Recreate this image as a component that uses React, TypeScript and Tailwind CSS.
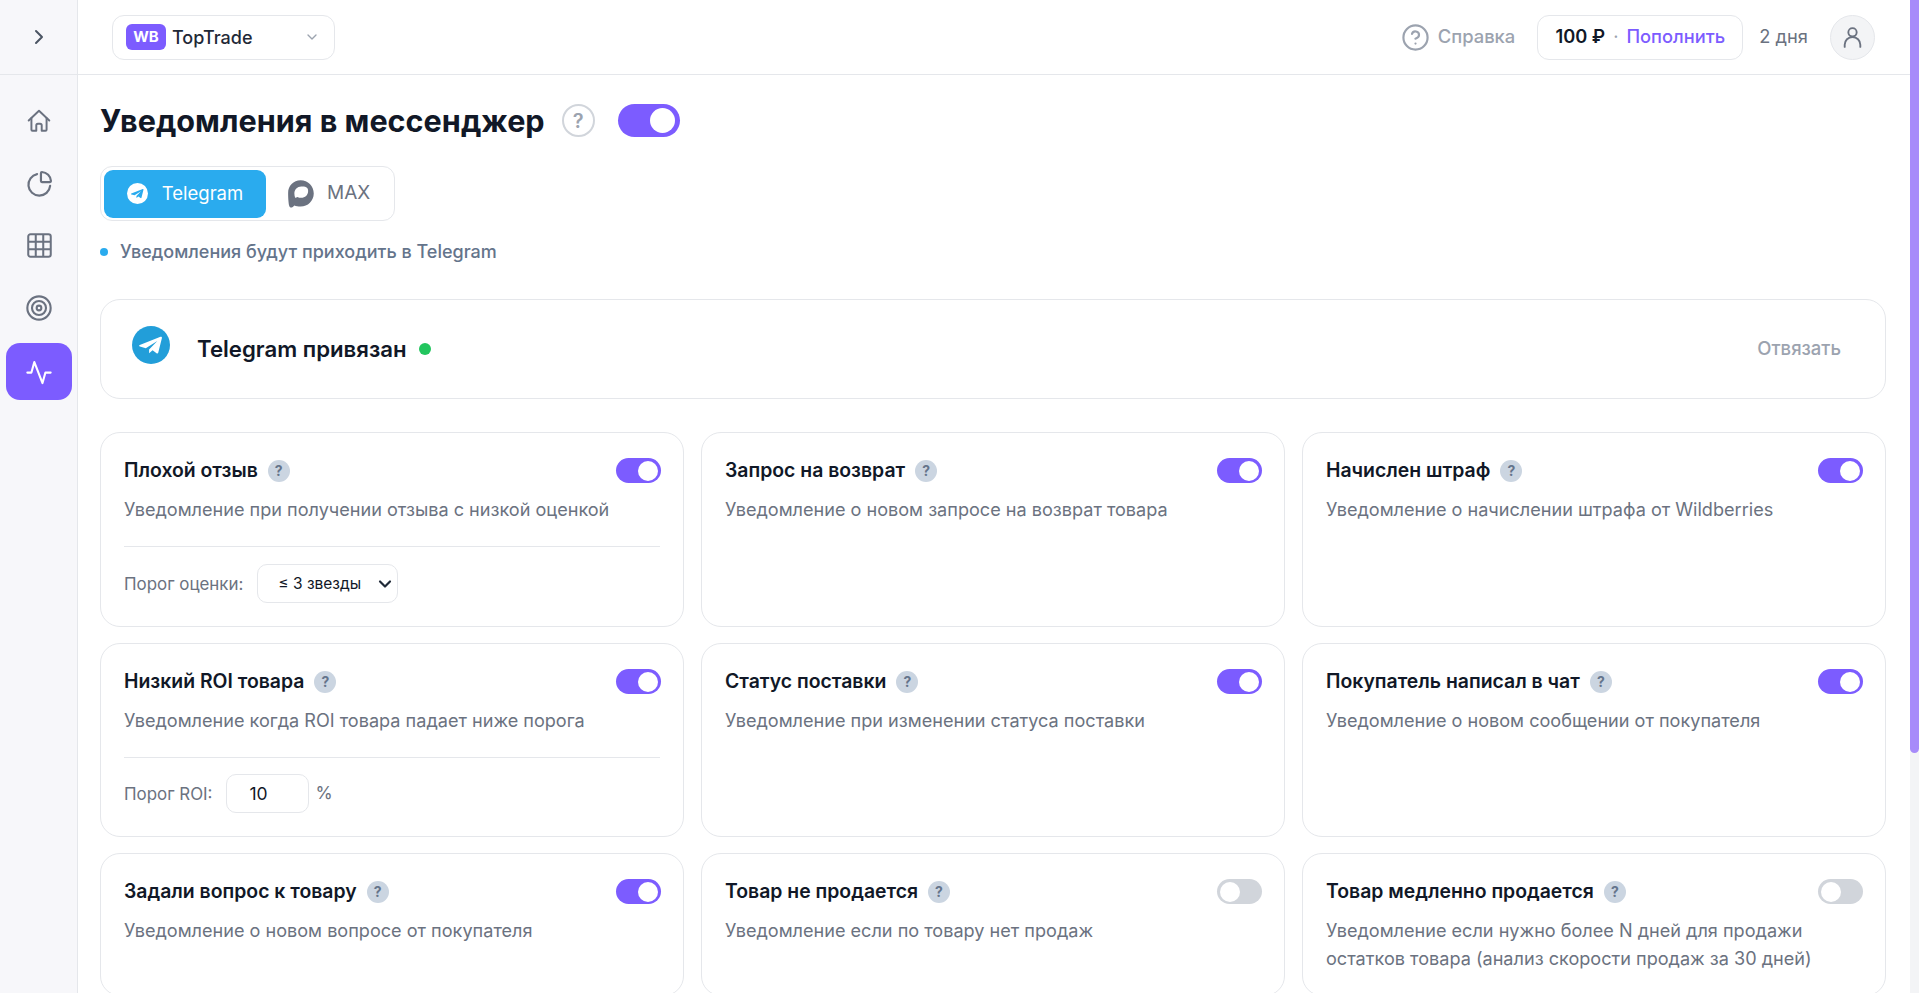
import { ChevronDown, ChevronRight, CircleHelp } from 'lucide-react';

const purple = 'bg-[#7c5cff]';

const cards = [
  { title: 'Плохой отзыв', text: 'Уведомление при получении отзыва с низкой оценкой', on: true, extra: 'rating' },
  { title: 'Запрос на возврат', text: 'Уведомление о новом запросе на возврат товара', on: true },
  { title: 'Начислен штраф', text: 'Уведомление о начислении штрафа от Wildberries', on: true },
  { title: 'Низкий ROI товара', text: 'Уведомление когда ROI товара падает ниже порога', on: true, extra: 'roi' },
  { title: 'Статус поставки', text: 'Уведомление при изменении статуса поставки', on: true },
  { title: 'Покупатель написал в чат', text: 'Уведомление о новом сообщении от покупателя', on: true },
  { title: 'Задали вопрос к товару', text: 'Уведомление о новом вопросе от покупателя', on: true },
  { title: 'Товар не продается', text: 'Уведомление если по товару нет продаж', on: false },
  {
    title: 'Товар медленно продается',
    text: 'Уведомление если нужно более N дней для продажи остатков товара (анализ скорости продаж за 30 дней)',
    on: false,
  },
];

function HomeIcon() {
  return (
    <svg viewBox="0 0 24 24" className="h-[26px] w-[26px]" fill="none" stroke="currentColor" strokeWidth="1.8" strokeLinecap="round" strokeLinejoin="round">
      <path d="M2.5 11.5 12 2.5l9.5 9" />
      <path d="M5 9.5V20a1 1 0 0 0 1 1h3.5v-5a1.5 1.5 0 0 1 1.5-1.5h2a1.5 1.5 0 0 1 1.5 1.5v5H18a1 1 0 0 0 1-1V9.500" />
    </svg>
  );
}

function PieIcon() {
  return (
    <svg viewBox="0 0 24 24" className="h-[29px] w-[29px]" fill="none" stroke="currentColor" strokeWidth="1.8" strokeLinecap="round" strokeLinejoin="round">
      <path d="M10 4.200A9 9 0 1 0 20.800 14" />
      <path d="M14 2.500a8 8 0 0 1 7.500 7.500.8.8 0 0 1-.8.8H14a.8.8 0 0 1-.8-.8V3.300a.8.8 0 0 1 .8-.8z" />
    </svg>
  );
}

function GridIcon() {
  return (
    <svg viewBox="0 0 24 24" className="h-[27px] w-[27px]" fill="none" stroke="currentColor" strokeWidth="1.800" strokeLinejoin="round">
      <rect x="2" y="2" width="20" height="20" rx="2" />
      <path d="M2 8.670h20M2 15.330h20M8.670 2v20M15.330 2v20" />
    </svg>
  );
}

function TargetIcon() {
  return (
    <svg viewBox="0 0 24 24" className="h-[28px] w-[28px]" fill="none" stroke="currentColor" strokeWidth="1.8">
      <circle cx="12" cy="12" r="10" />
      <circle cx="12" cy="12" r="6" />
      <circle cx="12" cy="12" r="2" />
    </svg>
  );
}

function PulseIcon() {
  return (
    <svg viewBox="0 0 24 24" className="h-[28px] w-[28px]" fill="none" stroke="currentColor" strokeWidth="1.8" strokeLinecap="round" strokeLinejoin="round">
      <path d="M2 12.500h3.500l2.500-9 7 18 2.500-9H22" />
    </svg>
  );
}

function UserIcon() {
  return (
    <svg viewBox="0 0 24 24" className="h-[25px] w-[25px]" fill="none" stroke="#6b7280" strokeWidth="1.800" strokeLinecap="round">
      <circle cx="12" cy="7" r="4" />
      <path d="M4.500 21v-2a7.500 7.500 0 0 1 15 0v2" />
    </svg>
  );
}

function TelegramLogo({ circle, plane, className }: { circle: string; plane: string; className: string }) {
  return (
    <svg viewBox="0 0 24 24" className={className}>
      <circle cx="12" cy="12" r="12" fill={circle} />
      <path
        fill={plane}
        d="M18 6.800 4.900 12c-.5.2-.5.8.1 1l3.700 1.100 7.300-4.600-5.200 5.300v2.400l2.200-1.900 2.500 1.900c.5.300 1 .1 1.100-.5L18.900 7.500c.1-.5-.4-.9-.9-.7z"
      />
    </svg>
  );
}

function MaxLogo() {
  return (
    <svg viewBox="0 0 24 24" className="h-[30px] w-[30px]">
      <path
        fill="#6b7280"
        fillRule="evenodd"
        d="M12.500 1C6.700 1 2.500 5.500 2.500 11c0 3 .1 5 .3 7 .2 2 .4 4.500 1.700 4.800 1 .2 2.200-.8 3-1.700 1.300.6 3 .9 5 .9 5.800 0 10.500-4.700 10.500-10.500S18.300 1 12.500 1zM13 6c-3.100 0-5.500 2.500-5.500 5.500 0 1 .2 2 .5 3 .2.600.7.500 1 .3l1-.5c.8.500 1.800.700 3 .700 3 0 5.500-2.400 5.500-5.500S16.100 6 13 6z"
      />
    </svg>
  );
}

function Toggle({ on }: { on: boolean }) {
  return (
    <div className={`-mr-px flex h-[25px] w-[45px] shrink-0 items-center rounded-full p-[3px] ${on ? `justify-end ${purple}` : 'justify-start bg-[#d1d5db]'}`}>
      <div className="h-[20px] w-[20px] rounded-full bg-white" />
    </div>
  );
}

function HelpBadge() {
  return (
    <div className="flex h-[22px] w-[22px] shrink-0 items-center justify-center rounded-full bg-[#cbd5e1] text-[14px] font-bold text-[#64748b]">?</div>
  );
}

function Card({ title, text, on, extra }: { title: string; text: string; on: boolean; extra?: string }) {
  return (
    <div className="rounded-[20px] border border-[#e5e7eb] bg-white p-[23px]">
      <div className="flex h-[29px] items-center justify-between">
        <div className="flex items-center gap-[10px]">
          <span className="text-[19.4px] font-semibold text-[#111827]">{title}</span>
          <HelpBadge />
        </div>
        <Toggle on={on} />
      </div>
      <p className="mt-[10px] text-[18.1px] leading-[28px] text-[#6b7280]">{text}</p>
      {extra === 'rating' && (
        <div className="mt-[23px] flex items-center gap-[14px] border-t border-[#e5e7eb] pt-[17px]">
          <span className="mt-[2px] text-[16.9px] text-[#6b7280]">Порог оценки:</span>
          <div className="relative">
            <select className="h-[39px] w-[141px] appearance-none rounded-[10px] border border-[#e5e7eb] bg-white pl-[20px] text-[15.5px] text-[#111827]">
              <option>≤ 3 звезды</option>
            </select>
            <ChevronDown className="pointer-events-none absolute right-[3px] top-[10px] h-[20px] w-[20px] text-[#1f2937]" strokeWidth={2.6} />
          </div>
        </div>
      )}
      {extra === 'roi' && (
        <div className="mt-[23px] flex items-center gap-[14px] border-t border-[#e5e7eb] pt-[16px]">
          <span className="mt-[3px] text-[16.9px] text-[#6b7280]">Порог ROI:</span>
          <input readOnly value="10" className="h-[39px] w-[83px] rounded-[10px] border border-[#e5e7eb] bg-white pl-[22px] text-[17.5px] text-[#111827] outline-none" />
          <span className="-ml-[8px] text-[17.5px] text-[#6b7280]">%</span>
        </div>
      )}
    </div>
  );
}

export default function App() {
  return (
    <div className="flex h-screen overflow-hidden bg-white font-['Inter',sans-serif]">
      <aside className="flex w-[78px] shrink-0 flex-col border-r border-[#e5e7eb] bg-[#f7f7fa] text-[#6b7280]">
        <div className="flex h-[75px] shrink-0 items-center justify-center border-b border-[#e5e7eb]">
          <ChevronRight className="h-[24px] w-[24px] text-[#4b5563]" strokeWidth={2} />
        </div>
        <nav className="flex flex-col items-center pl-[6px] pr-[5px] pt-[15px]">
          <div className="flex h-[62px] items-center justify-center"><HomeIcon /></div>
          <div className="flex h-[62px] items-center justify-center"><PieIcon /></div>
          <div className="flex h-[63px] items-center justify-center"><GridIcon /></div>
          <div className="flex h-[62px] items-center justify-center"><TargetIcon /></div>
          <div className={`mt-[4px] flex h-[57px] w-full items-center justify-center rounded-[14px] text-white ${purple}`}><PulseIcon /></div>
        </nav>
      </aside>

      <div className="flex min-w-0 flex-1 flex-col">
        <header className="flex h-[75px] shrink-0 items-center justify-between border-b border-[#e5e7eb] pl-[34px] pr-[35px]">
          <div className="flex h-[45px] w-[223px] items-center rounded-[12px] border border-[#e5e7eb] pl-[13px] pr-[14px]">
            <div className={`flex h-[26px] w-[40px] items-center justify-center rounded-[6px] text-[15px] font-bold text-white ${purple}`}>WB</div>
            <span className="ml-[6px] text-[18px] font-medium text-[#1f2937]">TopTrade</span>
            <ChevronDown className="ml-auto h-[16px] w-[16px] text-[#9ca3af]" />
          </div>
          <div className="flex items-center">
            <CircleHelp className="h-[29px] w-[29px] text-[#9ca3af]" strokeWidth={1.8} />
            <span className="ml-[8px] text-[18.4px] font-medium text-[#9ca3af]">Справка</span>
            <div className="ml-[22px] flex h-[45px] w-[206px] items-center justify-center rounded-[12px] border border-[#e5e7eb] text-[18.3px]">
              <span className="font-semibold text-[#111827]">100 ₽</span>
              <span className="mx-[8px] text-[#9ca3af]">·</span>
              <span className="font-medium text-[#7c5cff]">Пополнить</span>
            </div>
            <span className="ml-[16px] text-[18.3px] text-[#6b7280]">2 дня</span>
            <div className="ml-[22px] flex h-[45px] w-[45px] items-center justify-center rounded-full border border-[#e5e7eb] bg-[#f3f4f6]">
              <UserIcon />
            </div>
          </div>
        </header>

        <main className="min-h-0 flex-1 overflow-hidden pl-[22px] pr-[24px] pt-[29px]">
          <div className="flex h-[33px] items-center">
            <h1 className="text-[30.6px] font-bold text-[#111827]">Уведомления в мессенджер</h1>
            <div className="ml-[17px] flex h-[33px] w-[33px] items-center justify-center rounded-full border-2 border-[#d1d5db] text-[20px] font-semibold text-[#9ca3af]">?</div>
            <div className={`ml-[23px] flex h-[33px] w-[62px] items-center justify-end rounded-full pr-[5px] ${purple}`}>
              <div className="h-[25px] w-[25px] rounded-full bg-white" />
            </div>
          </div>

          <div className="mt-[29px] flex h-[55px] w-[295px] items-center rounded-[12px] border border-[#e5e7eb] pl-[3px]">
            <div className="flex h-[48px] w-[162px] items-center justify-center gap-[14px] rounded-[9px] bg-[#2aabee] text-[18.5px] text-white">
              <TelegramLogo circle="#ffffff" plane="#2aabee" className="h-[21px] w-[21px]" />
              Telegram
            </div>
            <div className="ml-[19px] flex items-center gap-[12px] text-[19px] text-[#6b7280]">
              <MaxLogo />
              MAX
            </div>
          </div>

          <div className="mt-[20px] flex h-[21px] items-center gap-[12px]">
            <div className="h-[8px] w-[8px] rounded-full bg-[#2aabee]" />
            <span className="text-[18px] font-medium text-[#64748b]">Уведомления будут приходить в Telegram</span>
          </div>

          <div className="mt-[37px] flex h-[100px] items-center rounded-[20px] border border-[#e5e7eb] pl-[31px] pr-[44px]">
            <TelegramLogo circle="#229ed9" plane="#ffffff" className="mb-[8px] h-[38px] w-[38px]" />
            <span className="ml-[27px] text-[22.2px] font-semibold text-[#111827]">Telegram привязан</span>
            <div className="ml-[12px] h-[12px] w-[12px] rounded-full bg-[#22c55e]" />
            <span className="ml-auto text-[18.5px] font-medium text-[#9ca3af]">Отвязать</span>
          </div>

          <div className="mt-[33px] grid grid-cols-3 gap-x-[17px] gap-y-[16px]">
            {cards.map((c) => (
              <Card key={c.title} {...c} />
            ))}
          </div>
        </main>
      </div>

      <div className="w-[9px] shrink-0 bg-[#f3f4f6]">
        <div className="h-[753px] rounded-b-full bg-[#a78bfa]" />
      </div>
    </div>
  );
}
